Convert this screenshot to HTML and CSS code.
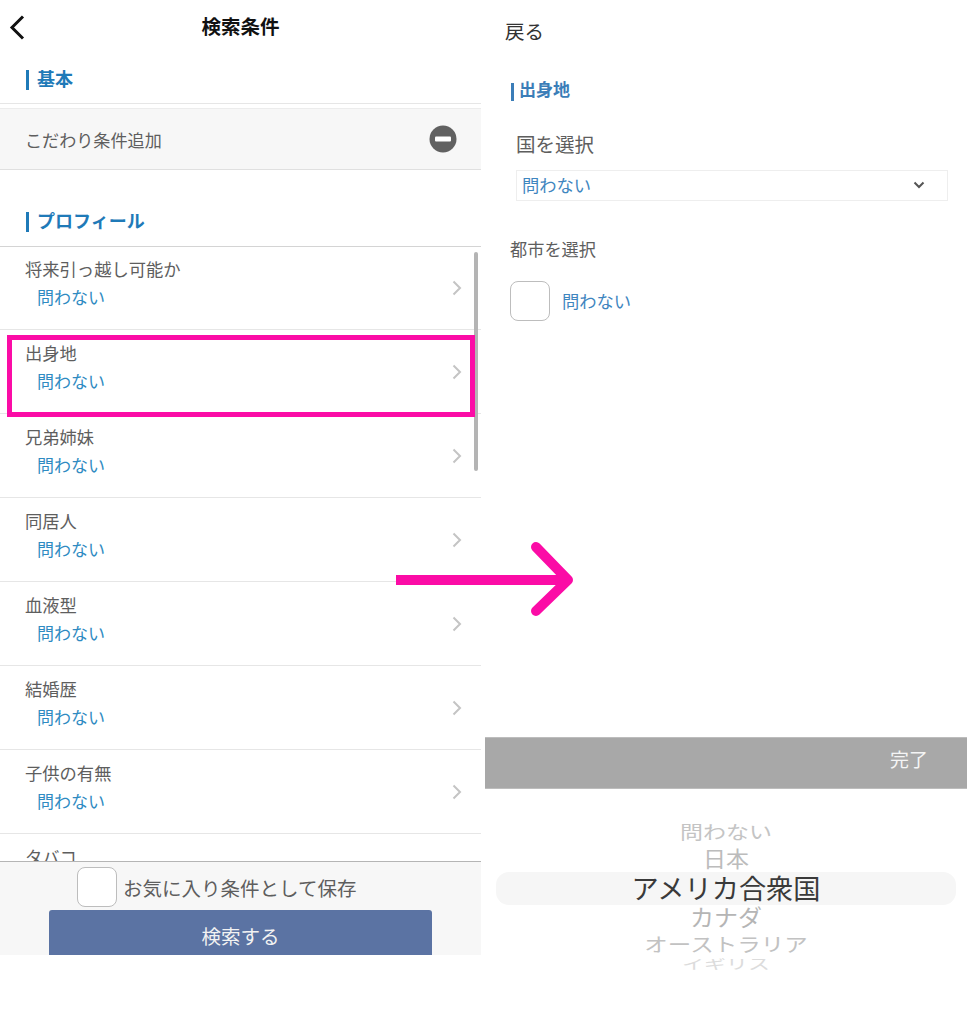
FILE: index.html
```html
<!DOCTYPE html>
<html lang="ja">
    <head>
        <meta charset="UTF-8" />
        <meta name="viewport" content="width=device-width, initial-scale=1.0" />
        <title>検索条件</title>
        <link rel="stylesheet" href="styles.css">
    </head>
    <body>
        <main class="wrapper">
            <section class="pane search">
                <header class="top">
                    <svg class="back" width="18" height="26" viewBox="0 0 18 26">
                        <path d="M15 2.5 L4 13.5 L15 24.5" fill="none" stroke="#111" stroke-width="3" />
                    </svg>
                    <h1>検索条件</h1>
                </header>
                <h2 class="heading basic">基本</h2>
                <div class="rule"></div>
                <div class="extra">
                    <span>こだわり条件追加</span>
                    <svg width="28" height="28" viewBox="0 0 28 28">
                        <circle cx="14" cy="14" r="13.5" fill="#616161" />
                        <rect x="6" y="11.5" width="16" height="5" rx="1" fill="#fff" />
                    </svg>
                </div>
                <h2 class="heading profile">プロフィール</h2>
                <ul class="list">
                    <li class="row"><p class="name">将来引っ越し可能か</p><p class="value">問わない</p>
                        <svg class="chev" width="10" height="16" viewBox="0 0 10 16"><path d="M1.5 1.5 L8 8 L1.5 14.5" /></svg></li>
                    <li class="row"><p class="name">出身地</p><p class="value">問わない</p>
                        <svg class="chev" width="10" height="16" viewBox="0 0 10 16"><path d="M1.5 1.5 L8 8 L1.5 14.5" /></svg></li>
                    <li class="row"><p class="name">兄弟姉妹</p><p class="value">問わない</p>
                        <svg class="chev" width="10" height="16" viewBox="0 0 10 16"><path d="M1.5 1.5 L8 8 L1.5 14.5" /></svg></li>
                    <li class="row"><p class="name">同居人</p><p class="value">問わない</p>
                        <svg class="chev" width="10" height="16" viewBox="0 0 10 16"><path d="M1.5 1.5 L8 8 L1.5 14.5" /></svg></li>
                    <li class="row"><p class="name">血液型</p><p class="value">問わない</p>
                        <svg class="chev" width="10" height="16" viewBox="0 0 10 16"><path d="M1.5 1.5 L8 8 L1.5 14.5" /></svg></li>
                    <li class="row"><p class="name">結婚歴</p><p class="value">問わない</p>
                        <svg class="chev" width="10" height="16" viewBox="0 0 10 16"><path d="M1.5 1.5 L8 8 L1.5 14.5" /></svg></li>
                    <li class="row"><p class="name">子供の有無</p><p class="value">問わない</p>
                        <svg class="chev" width="10" height="16" viewBox="0 0 10 16"><path d="M1.5 1.5 L8 8 L1.5 14.5" /></svg></li>
                    <li class="row"><p class="name">タバコ</p></li>
                </ul>
                <footer class="bottom">
                    <div class="save">
                        <span class="check"></span>
                        <span>お気に入り条件として保存</span>
                    </div>
                    <div class="search-btn">検索する</div>
                </footer>
            </section>

            <section class="pane detail">
                <div class="return">戻る</div>
                <h2 class="heading origin">出身地</h2>
                <p class="country-label">国を選択</p>
                <div class="select">
                    <span>問わない</span>
                    <svg width="12" height="8" viewBox="0 0 12 8"><path d="M1.5 1.5 L6 6 L10.5 1.5" fill="none" stroke="#555" stroke-width="2" /></svg>
                </div>
                <p class="city-label">都市を選択</p>
                <div class="city">
                    <span class="check"></span>
                    <span class="value-plain">問わない</span>
                </div>
                <div class="done-bar"><span>完了</span></div>
                <div class="picker">
                    <div class="picker-band"></div>
                    <div class="item i1">問わない</div>
                    <div class="item i2">日本</div>
                    <div class="item i3">アメリカ合衆国</div>
                    <div class="item i4">カナダ</div>
                    <div class="item i5">オーストラリア</div>
                    <div class="item i6">イギリス</div>
                </div>
            </section>

            <!-- annotation on top of the screenshots -->
            <div class="scrollbar"></div>
            <div class="highlight"></div>
            <svg class="arrow" width="178" height="76" viewBox="0 0 178 76">
                <path d="M0 38 H170" stroke="#fb0ca6" stroke-width="10" fill="none" />
                <path d="M140 5 L172 38 L140 69" stroke="#fb0ca6" stroke-width="10" stroke-linecap="round" stroke-linejoin="round" fill="none" />
            </svg>
        </main>
    </body>
</html>
```

FILE: styles.css
```css
* {
    padding: 0;
    margin: 0;
    box-sizing: border-box;
}
body {
    background-color: #fff;
    font-family: "Noto Sans CJK JP", "Noto Sans", sans-serif;
    color: #5e5e5e;
}
.wrapper {
    position: relative;
    display: flex;
    gap: 4px;
    width: 970px;
    height: 1024px;
    overflow: hidden;
}
.pane {
    width: 481px;
    height: 955px;
    display: flex;
    flex-direction: column;
}
.detail {
    width: 482px;
    height: 970px;
}

/* headings */
.heading {
    font-size: 18px;
    line-height: 24px;
    font-weight: 700;
    color: #1f7ab8;
    border-left: 3px solid #1f7ab8;
    padding: 0 0 4px 8px;
    margin-left: 26px;
    height: 20px;
    flex-shrink: 0;
    display: flex;
    align-items: center;
}

/* left */
.top {
    position: relative;
    height: 56px;
    flex-shrink: 0;
    text-align: center;
}
.top h1 {
    font-size: 19.5px;
    font-weight: 700;
    color: #111;
    line-height: 52px;
}
.back {
    position: absolute;
    left: 8px;
    top: 14px;
}
.basic {
    margin-top: 14px;
}
.rule {
    margin-top: 13px;
    height: 1px;
    flex-shrink: 0;
    background-color: #e6e6e6;
}
.extra {
    margin-top: 4px;
    height: 62px;
    flex-shrink: 0;
    display: flex;
    align-items: center;
    justify-content: space-between;
    padding: 0 24px 0 25px;
    background-color: #f7f7f7;
    border-top: 1px solid #ececec;
    border-bottom: 1px solid #e0e0e0;
    font-size: 17.1px;
}
.profile {
    margin-top: 42px;
}
.list {
    list-style: none;
    margin-top: 14px;
    border-top: 1px solid #d4d4d4;
    flex: 1;
    overflow: hidden;
}
.row {
    position: relative;
    height: 84px;
    padding: 11px 0 0 25px;
    border-bottom: 1px solid #e6e6e6;
}
.row:first-child {
    margin-top: -1px;
}
.name {
    font-size: 17.3px;
    line-height: 24px;
}
.value {
    font-size: 17px;
    line-height: 24px;
    margin: 4px 0 0 12px;
    color: #2f8bc2;
}
.chev {
    position: absolute;
    right: 19px;
    top: 34px;
}
.chev path {
    fill: none;
    stroke: #c4c4c4;
    stroke-width: 2;
}
.bottom {
    height: 94px;
    flex-shrink: 0;
    background-color: #f7f7f7;
    border-top: 1px solid #b5b5b5;
    overflow: hidden;
}
.save {
    display: flex;
    align-items: center;
    gap: 6px;
    height: 40px;
    margin-top: 5px;
    padding-left: 77px;
    font-size: 19.5px;
}
.check {
    display: block;
    width: 40px;
    height: 40px;
    background-color: #fff;
    border: 1px solid #bdbdbd;
    border-radius: 8px;
    flex-shrink: 0;
}
.search-btn {
    width: 383px;
    height: 50px;
    margin: 3px auto 0;
    padding-top: 10px;
    background-color: #5b73a3;
    border-radius: 3px 3px 0 0;
    color: #f2f2f2;
    font-size: 19.5px;
    line-height: 32px;
    text-align: center;
}

/* right */
.return {
    margin: 19px 0 0 20px;
    font-size: 19.5px;
    line-height: 24px;
    color: #333;
}
.origin {
    margin-top: 40px;
    height: 18px;
    color: #3b7db8;
    border-left-color: #3b7db8;
    font-size: 17px;
    padding: 0 0 6px 5px;
}
.country-label {
    margin: 31px 0 0 31px;
    font-size: 19.5px;
    line-height: 24px;
}
.select {
    margin: 14px 19px 0 31px;
    height: 31px;
    flex-shrink: 0;
    display: flex;
    align-items: center;
    justify-content: space-between;
    padding: 0 22px 3px 5px;
    border: 1px solid #eee;
    font-size: 17.3px;
    color: #3f86bf;
}
.select svg {
    margin-top: 2px;
}
.city-label {
    margin: 36px 0 0 25px;
    font-size: 17.2px;
    line-height: 24px;
}
.city {
    margin: 20px 0 0 25px;
    display: flex;
    align-items: center;
    gap: 12px;
}
.value-plain {
    font-size: 17.3px;
    padding-bottom: 2px;
    color: #3f86bf;
}
.done-bar {
    margin-top: 416px;
    height: 52px;
    flex-shrink: 0;
    display: flex;
    align-items: center;
    justify-content: flex-end;
    padding: 0 39px 9px 0;
    background-color: #a8a8a8;
    border: 1px solid #bdbdbd;
    border-width: 1px 0;
    font-size: 19px;
    color: #f5f5f5;
}

/* picker wheel */
.picker {
    position: relative;
    margin-top: 30px;
    height: 151px;
    overflow: hidden;
    text-align: center;
}
.picker-band {
    position: absolute;
    left: 11px;
    top: 53px;
    width: 460px;
    height: 33px;
    background-color: #f6f6f6;
    border-radius: 13px;
}
.item {
    position: relative;
    line-height: 28px;
    height: 28px;
    font-size: 23px;
}
.i1 {
    margin-top: -2px;
    height: 27px;
    color: #c4c4c4;
    transform: scaleY(0.8);
}
.i2 {
    color: #bcbcbc;
    transform: scaleY(0.92);
}
.i3 {
    height: 30px;
    line-height: 30px;
    font-size: 27.2px;
    color: #3a3a3a;
}
.i4 {
    height: 28px;
    font-size: 24px;
    color: #b5b5b5;
    transform: scaleY(0.95);
}
.i5 {
    height: 26px;
    font-size: 23.5px;
    color: #c2c2c2;
    transform: scaleY(0.8);
}
.i6 {
    height: 12px;
    font-size: 22px;
    line-height: 22px;
    color: #dcdcdc;
    transform: scaleY(0.6);
    transform-origin: top;
}

/* overlays */
.scrollbar {
    position: absolute;
    left: 474px;
    top: 252px;
    width: 4px;
    height: 219px;
    border-radius: 2px;
    background-color: #b4b4b4;
}
.highlight {
    position: absolute;
    left: 7px;
    top: 335px;
    width: 468px;
    height: 82px;
    border: 5px solid #fb0ca6;
}
.arrow {
    position: absolute;
    left: 396px;
    top: 542px;
}
```
